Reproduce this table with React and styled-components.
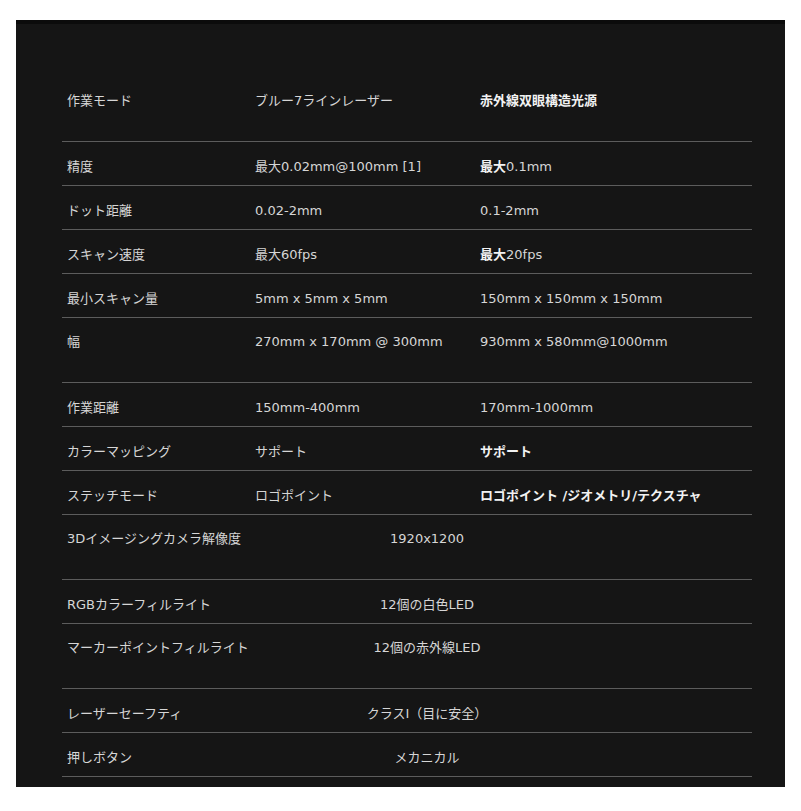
import React from "react";
import styled, { createGlobalStyle } from "styled-components";

const GlobalStyle = createGlobalStyle`
  html, body {
    margin: 0;
    padding: 0;
    background: #ffffff;
  }
  body {
    font-family: "DejaVu Sans", "Noto Sans CJK JP", sans-serif;
  }
`;

const Panel = styled.div`
  margin: 20px 16px 0;
  height: 767px;
  box-sizing: border-box;
  background: #151515;
  border-top: 4px solid #0b0b0b;
  padding: 53px 33px 0 46px;
`;

const Table = styled.div`
  display: flex;
  flex-direction: column;
`;

const Row = styled.div`
  display: grid;
  grid-template-columns: ${({ $cols }) => $cols};
  height: ${({ $tall }) => ($tall ? "65px" : "44px")};
  box-sizing: border-box;
  border-bottom: 1px solid #5c5c5c;
  padding-top: ${({ $tall }) => ($tall ? "15px" : "16px")};
  font-size: 13px;
  line-height: 18px;
  color: #d6d6d6;
`;

const Cell = styled.div`
  padding: 0 5px;
  white-space: nowrap;
  text-align: ${({ $center }) => ($center ? "center" : "left")};
  font-weight: ${({ $strong }) => ($strong ? 700 : 400)};
  color: ${({ $strong }) => ($strong ? "#f2f2f2" : "inherit")};
`;

const Strong = styled.span`
  font-weight: 700;
  color: #f2f2f2;
`;

const THREE = "188px 225px 1fr";
const TWO = "240px 250px 1fr";

const specRows = [
  { label: "作業モード", a: "ブルー7ラインレーザー", b: "赤外線双眼構造光源", bStrong: true, tall: true },
  { label: "精度", a: "最大0.02mm@100mm [1]", b: <><Strong>最大</Strong>0.1mm</> },
  { label: "ドット距離", a: "0.02-2mm", b: "0.1-2mm" },
  { label: "スキャン速度", a: "最大60fps", b: <><Strong>最大</Strong>20fps</> },
  { label: "最小スキャン量", a: "5mm x 5mm x 5mm", b: "150mm x 150mm x 150mm" },
  { label: "幅", a: "270mm x 170mm @ 300mm", b: "930mm x 580mm@1000mm", tall: true },
  { label: "作業距離", a: "150mm-400mm", b: "170mm-1000mm" },
  { label: "カラーマッピング", a: "サポート", b: "サポート", bStrong: true },
  { label: "ステッチモード", a: "ロゴポイント", b: "ロゴポイント /ジオメトリ/テクスチャ", bStrong: true },
];

const hardwareRows = [
  { label: "3Dイメージングカメラ解像度", value: "1920x1200", tall: true },
  { label: "RGBカラーフィルライト", value: "12個の白色LED" },
  { label: "マーカーポイントフィルライト", value: "12個の赤外線LED", tall: true },
  { label: "レーザーセーフティ", value: "クラスI（目に安全）" },
  { label: "押しボタン", value: "メカニカル" },
];

export default function App() {
  return (
    <>
      <GlobalStyle />
      <Panel>
        <Table>
          {specRows.map((r) => (
            <Row key={r.label} $cols={THREE} $tall={r.tall}>
              <Cell>{r.label}</Cell>
              <Cell>{r.a}</Cell>
              <Cell $strong={r.bStrong}>{r.b}</Cell>
            </Row>
          ))}
          {hardwareRows.map((r) => (
            <Row key={r.label} $cols={TWO} $tall={r.tall}>
              <Cell>{r.label}</Cell>
              <Cell $center>{r.value}</Cell>
              <Cell />
            </Row>
          ))}
        </Table>
      </Panel>
    </>
  );
}
